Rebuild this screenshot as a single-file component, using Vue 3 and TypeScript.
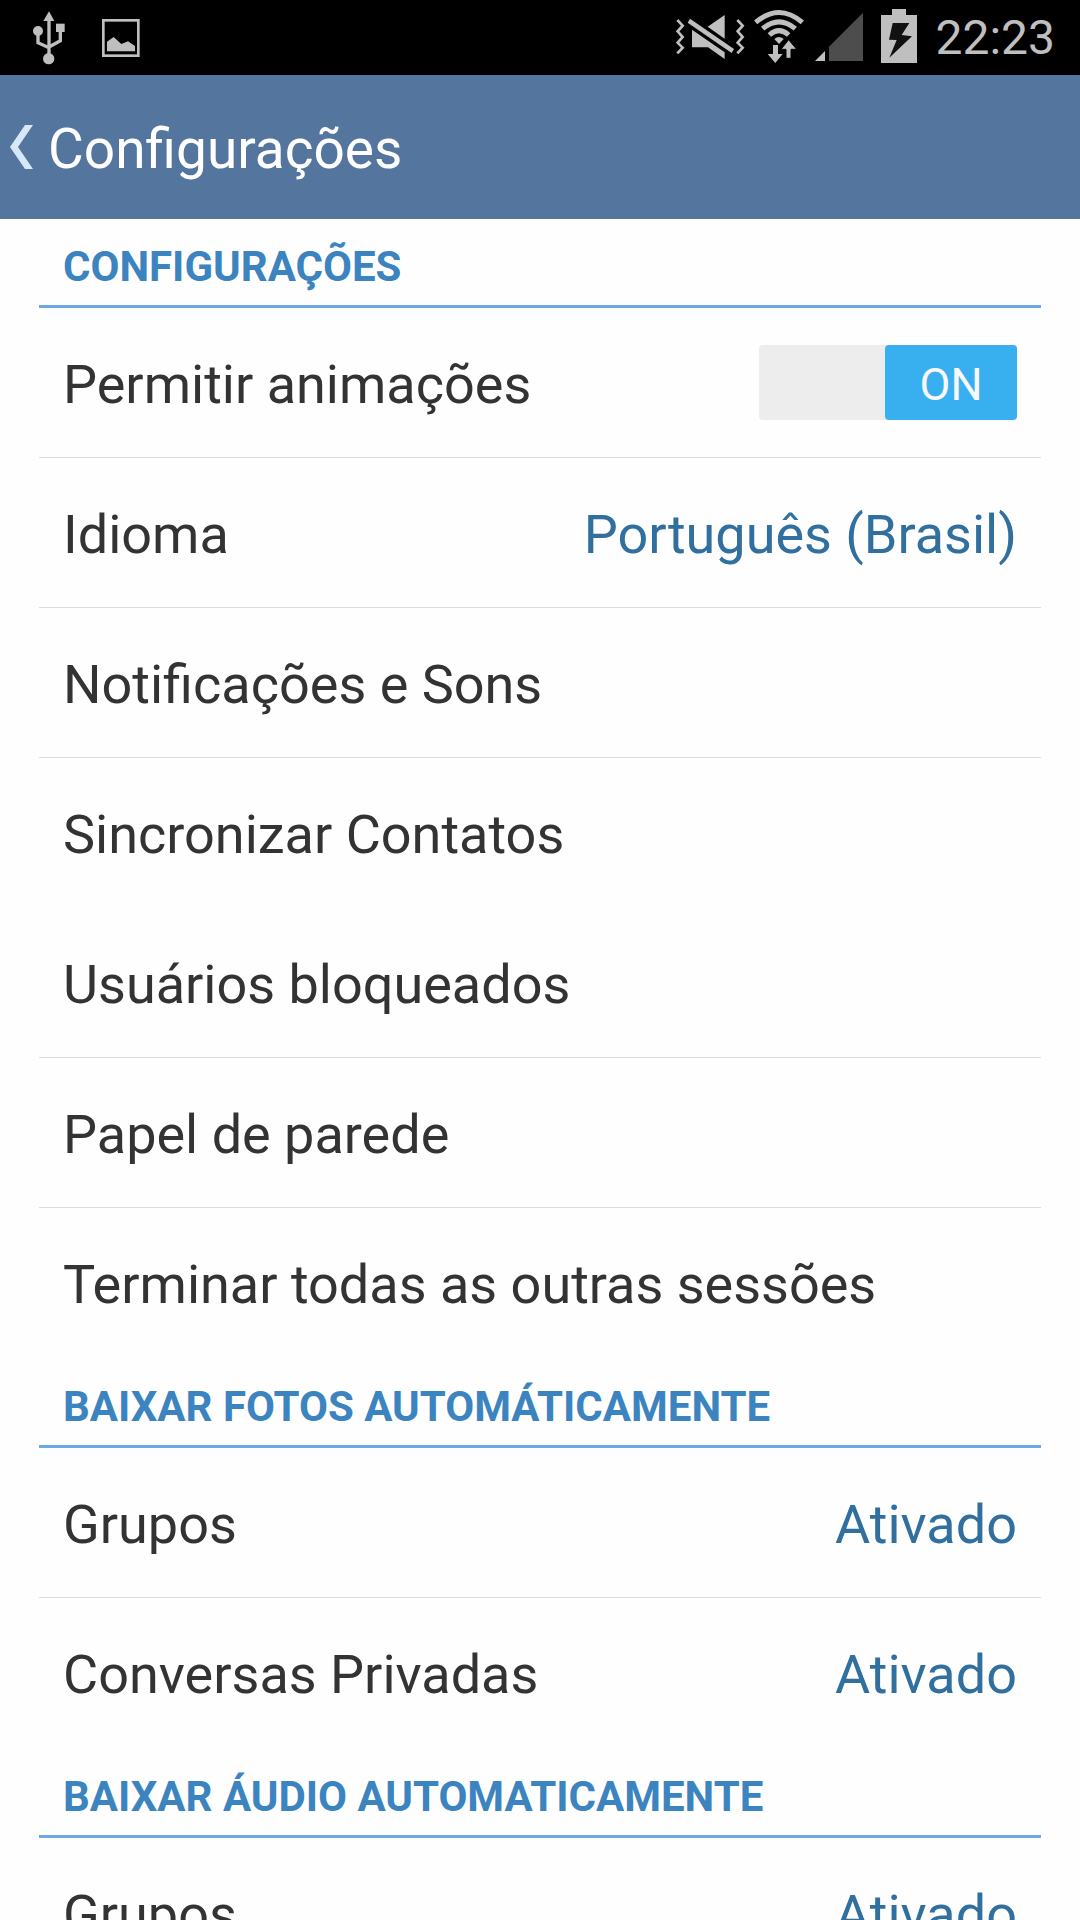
<script setup lang="ts">
import { ref } from 'vue'

interface Row {
  label: string
  value?: string
  toggle?: boolean
  divider?: boolean
}

interface Section {
  title: string
  rows: Row[]
}

const animations = ref(true)

const sections: Section[] = [
  {
    title: 'CONFIGURAÇÕES',
    rows: [
      { label: 'Permitir animações', toggle: true, divider: true },
      { label: 'Idioma', value: 'Português (Brasil)', divider: true },
      { label: 'Notificações e Sons', divider: true },
      { label: 'Sincronizar Contatos' },
      { label: 'Usuários bloqueados', divider: true },
      { label: 'Papel de parede', divider: true },
      { label: 'Terminar todas as outras sessões' },
    ],
  },
  {
    title: 'BAIXAR FOTOS AUTOMÁTICAMENTE',
    rows: [
      { label: 'Grupos', value: 'Ativado', divider: true },
      { label: 'Conversas Privadas', value: 'Ativado' },
    ],
  },
  {
    title: 'BAIXAR ÁUDIO AUTOMATICAMENTE',
    rows: [{ label: 'Grupos', value: 'Ativado', divider: true }],
  },
]
</script>

<template>
  <div class="screen">
    <div class="status">
      <div class="notices">
        <!-- USB -->
        <svg width="34" height="75" viewBox="96 0 102 225" aria-hidden="true">
          <g fill="none" stroke="#bfbfbf" stroke-width="10">
            <path d="M147 60V165M114 95V128L147 143M181 92V122L147 141" />
          </g>
          <g fill="#bfbfbf">
            <path d="M147 34L163 63H130Z" />
            <circle cx="114" cy="93" r="15" />
            <rect x="168" y="71" width="26" height="25" />
            <circle cx="146" cy="176" r="17" />
          </g>
        </svg>
        <!-- Picture -->
        <svg width="38" height="75" viewBox="306 0 114 225" aria-hidden="true">
          <rect x="310" y="61" width="105" height="106" fill="none" stroke="#bfbfbf" stroke-width="8" />
          <path d="M321 154V125L341 111L364 132L384 124L405 138V154Z" fill="#bfbfbf" />
        </svg>
      </div>
      <div class="indicators">
        <!-- Vibrate, sound off -->
        <svg class="mute" width="70" height="75" viewBox="45 0 210 225" aria-hidden="true">
          <g fill="none" stroke="#bfbfbf" stroke-width="8">
            <path d="M52 60L68 77L53 94L68 111L53 128L68 143L52 160" />
            <path d="M232 60L248 77L233 94L248 111L233 128L248 143L232 160" />
          </g>
          <g fill="#bfbfbf">
            <path d="M90 56L222 147L215 159L83 68Z" />
            <path d="M194 45V116L143 80Z" />
            <path d="M96 89L194 157V177L144 142H96Z" />
          </g>
        </svg>
        <!-- Wi-Fi with traffic arrows -->
        <svg class="wifi" width="50" height="75" viewBox="282 0 150 225" aria-hidden="true">
          <g fill="none" stroke="#bfbfbf" stroke-width="15">
            <path d="M287 67Q357 8 427 67" />
            <path d="M308 86Q357 45 406 86" />
            <path d="M328 105Q357 79 386 105" />
          </g>
          <g fill="#bfbfbf">
            <path d="M343 117Q357 105 371 117L357 132Z" />
            <path d="M386 119L410 148H393V175H378V148H363Z" stroke="#000" stroke-width="3" />
            <path d="M339 135H354V162H368L346 189L323 162H339Z" />
          </g>
        </svg>
        <!-- Mobile signal -->
        <svg class="signal" width="48" height="75" viewBox="465 0 144 225" aria-hidden="true">
          <path d="M507 183V140L609 38V183Z" fill="#4d4d4d" />
          <path d="M465 183L495 153V183Z" fill="#bfbfbf" />
        </svg>
        <!-- Charging battery -->
        <svg class="battery" width="36" height="75" viewBox="63 0 108 225" aria-hidden="true">
          <path d="M96 27H138V45H171V189H63V45H96Z" fill="#bfbfbf" />
          <path d="M98 69H148L125 105L156 109L88 173L110 120L87 119Z" fill="#111" />
        </svg>
        <time class="clock">22:23</time>
      </div>
    </div>

    <header class="bar">
      <button class="back" type="button">
        <svg width="23" height="44" viewBox="0 0 23 44" aria-hidden="true">
          <path d="M15 0H23L8 22L23 44H15L0 22Z" fill="#d6e8f7" />
        </svg>
        <span>Configurações</span>
      </button>
    </header>

    <main class="list">
      <section v-for="section in sections" :key="section.title" class="section">
        <h2>{{ section.title }}</h2>
        <ul>
          <li v-for="row in section.rows" :key="row.label" :class="{ divider: row.divider }">
            <label v-if="row.toggle" class="row">
              <span>{{ row.label }}</span>
              <span class="switch" :class="{ on: animations }">
                <input v-model="animations" type="checkbox" role="switch" />
                <span class="thumb">{{ animations ? 'ON' : 'OFF' }}</span>
              </span>
            </label>
            <button v-else class="row" type="button">
              <span>{{ row.label }}</span>
              <span v-if="row.value" class="value">{{ row.value }}</span>
            </button>
          </li>
        </ul>
      </section>
    </main>
  </div>
</template>

<style>
body {
  margin: 0;
}
</style>

<style scoped>
.screen {
  display: flex;
  flex-direction: column;
  height: 100vh;
  overflow: hidden;
  background: #fefefe;
  color: #333;
  font-family: Roboto, 'Liberation Sans', sans-serif;
}

svg {
  display: block;
  flex: none;
}

button {
  border: 0;
  background: none;
  color: inherit;
  font: inherit;
  text-align: left;
}

.status {
  display: flex;
  flex: none;
  justify-content: space-between;
  height: 75px;
  padding: 0 25px 0 32px;
  background: #000;
  color: #bfbfbf;
}

.notices {
  display: flex;
  gap: 36px;
}

.indicators {
  display: flex;
}

.wifi {
  margin-left: 9px;
}

.signal {
  margin-left: 11px;
}

.battery {
  margin: 0 18px;
}

.clock {
  font-size: 48px;
  line-height: 75px;
}

.bar {
  display: flex;
  flex: none;
  height: 144px;
  background: #54759e;
  color: #fff;
}

.back {
  display: flex;
  align-items: center;
  gap: 15px;
  padding: 0 24px 0 10px;
  font-size: 55px;
  line-height: 64px;
}

.back span {
  padding-top: 4px;
}

.list {
  flex: 1;
  min-height: 0;
  padding: 0 39px;
  overflow-y: auto;
  scrollbar-width: none;
}

.section + .section {
  margin-top: 1px;
}

h2 {
  box-sizing: border-box;
  height: 89px;
  margin: 0;
  padding: 24px 24px 0;
  border-bottom: 3px solid #6ca8e3;
  color: #3b84c0;
  font-size: 42px;
  font-weight: 700;
  line-height: 48px;
}

ul {
  margin: 0;
  padding: 0;
  list-style: none;
}

li {
  box-sizing: border-box;
  height: 150px;
}

.divider {
  border-bottom: 1px solid #dcdcdc;
}

.row {
  box-sizing: border-box;
  display: flex;
  align-items: center;
  justify-content: space-between;
  width: 100%;
  height: 149px;
  padding: 4px 24px 0;
  font-size: 54px;
  line-height: 64px;
}

.value {
  color: #316f9f;
}

label.row {
  cursor: pointer;
}

.switch {
  display: flex;
  box-sizing: border-box;
  width: 258px;
  height: 75px;
  margin-bottom: 4px;
  border-radius: 4px;
  background: #ededed;
}

.switch.on {
  justify-content: flex-end;
}

.switch input {
  position: absolute;
  width: 132px;
  height: 75px;
  margin: 0;
  opacity: 0;
}

.thumb {
  width: 132px;
  border-radius: 4px;
  background: #b5b5b5;
  color: #f8f8f8;
  font-size: 45px;
  line-height: 80px;
  text-align: center;
}

.on .thumb {
  background: #38b0f0;
}
</style>
